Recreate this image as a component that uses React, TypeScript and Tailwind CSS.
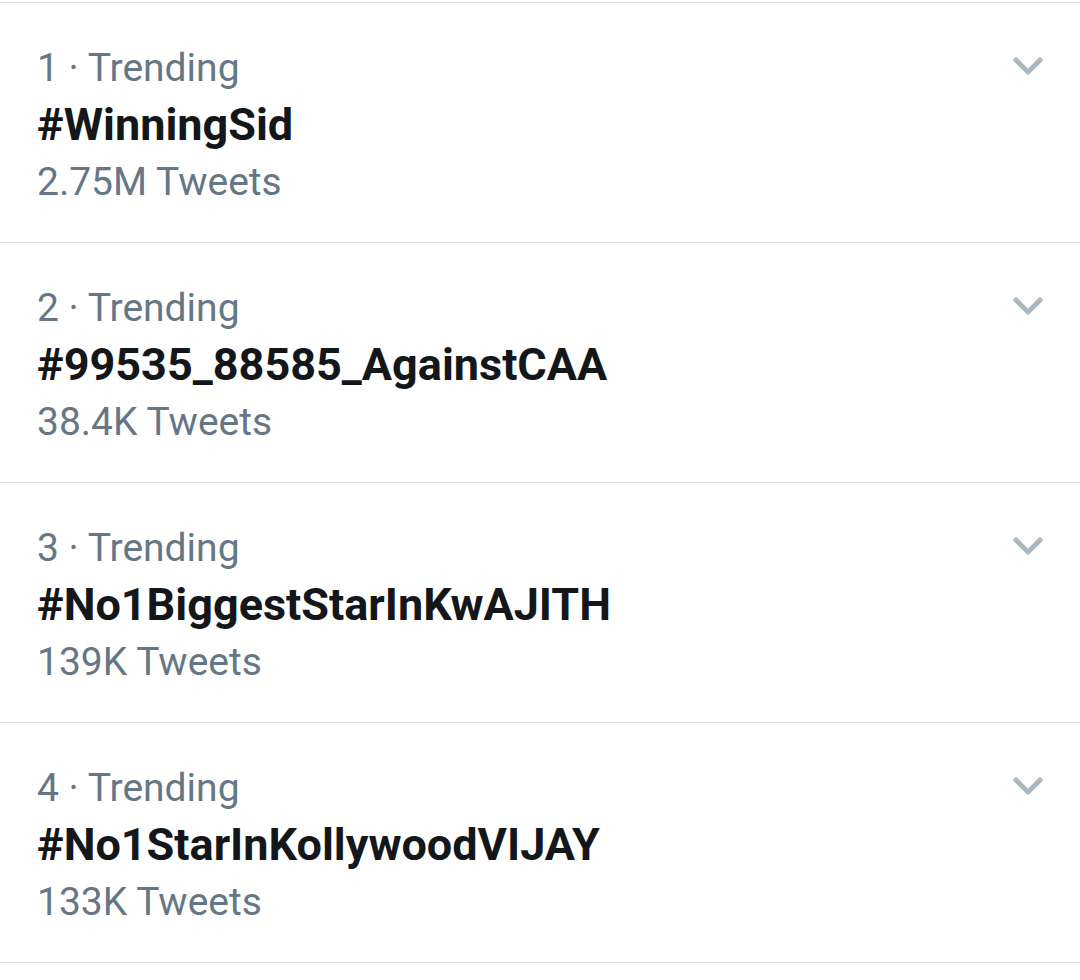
const trends = [
  { rank: 1, tag: "#WinningSid", count: "2.75M Tweets" },
  { rank: 2, tag: "#99535_88585_AgainstCAA", count: "38.4K Tweets" },
  { rank: 3, tag: "#No1BiggestStarInKwAJITH", count: "139K Tweets" },
  { rank: 4, tag: "#No1StarInKollywoodVIJAY", count: "133K Tweets" },
];

const Chevron = () => (
  <svg width="40" height="40" viewBox="0 0 40 40" fill="none">
    <path
      d="M8 14 L20 26 L32 14"
      stroke="#aab8c2"
      strokeWidth="5"
      strokeLinecap="round"
      strokeLinejoin="round"
    />
  </svg>
);

export default function App() {
  return (
    <div className="w-[1080px] h-[980px] bg-white pt-[2px] font-['Roboto',sans-serif]">
      <div className="border-t border-[#d9e0e4]">
        {trends.map((t) => (
          <div
            key={t.rank}
            className="h-[240px] border-b border-[#d9e0e4] flex items-start justify-between pl-[37px] pr-[32px] pt-[37px]"
          >
            <div className="flex flex-col">
              <span className="text-[39px] leading-[56px] text-[#657786]">
                {t.rank} · Trending
              </span>
              <span className="text-[45px] leading-[58px] font-bold text-[#14171a]">
                {t.tag}
              </span>
              <span className="text-[39px] leading-[56px] text-[#657786]">
                {t.count}
              </span>
            </div>
            <div className="mt-[6px]">
              <Chevron />
            </div>
          </div>
        ))}
      </div>
    </div>
  );
}
